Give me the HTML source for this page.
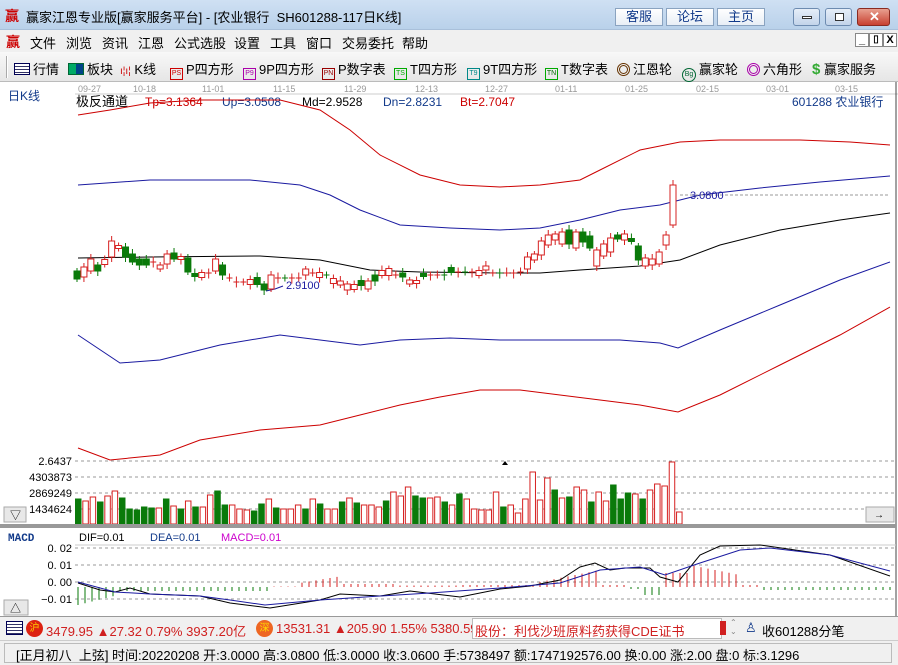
<!DOCTYPE html>
<html><head><meta charset="utf-8"><style>
*{margin:0;padding:0;box-sizing:border-box}
body{width:898px;height:665px;overflow:hidden;background:#fff;font-family:"Liberation Sans","Noto Sans CJK SC",sans-serif;font-size:12px;position:relative}
.abs{position:absolute;white-space:nowrap}
#title{left:0;top:0;width:898px;height:30px;background:linear-gradient(#cfe0f3,#b9d1ea);border-bottom:1px solid #a9c0da}
#menu{left:0;top:30px;width:898px;height:22px;background:#f0f0f0}
#tool{left:0;top:52px;width:898px;height:30px;background:linear-gradient(#f8f8f8,#e6e6e6);border-bottom:1px solid #bbb}
.tb{position:absolute;top:8px;height:18px;background:linear-gradient(#fff,#e8eef6);border:1px solid #8aa3c0;color:#123a8a;font-size:13px;text-align:center;line-height:16px}
.wb{position:absolute;top:8px;height:18px;border:1px solid #6d8bb0;border-radius:3px;background:linear-gradient(#e6eef8,#c3d4ea)}
.mi{position:absolute;top:3px;font-size:13px;color:#000}
.ti{position:absolute;top:7px;font-size:13px;color:#000}
.ic{display:inline-block;width:13px;height:12px;font-size:7px;line-height:10px;text-align:center;border:1px solid;vertical-align:-1px;margin-right:3px}
</style></head><body>
<div id="title" class="abs">
<span class="abs" style="left:5px;top:6px;color:#c00;font-size:14px;font-weight:bold">赢</span>
<span class="abs" style="left:26px;top:7px;font-size:13px">赢家江恩专业版[赢家服务平台] - [农业银行&nbsp; SH601288-117日K线]</span>
<div class="tb" style="left:615px;width:48px">客服</div>
<div class="tb" style="left:666px;width:48px">论坛</div>
<div class="tb" style="left:717px;width:48px">主页</div>
<div class="wb" style="left:793px;width:27px"><div style="position:absolute;left:8px;top:7px;width:10px;height:3px;border:1px solid #333;background:#fff"></div></div>
<div class="wb" style="left:825px;width:27px"><div style="position:absolute;left:9px;top:4px;width:9px;height:8px;border:1px solid #333;background:#fff"></div></div>
<div class="wb" style="left:857px;width:33px;background:linear-gradient(#e8a090,#c84030);border-color:#8a2a20"><span style="position:absolute;left:11px;top:0;color:#fff;font-weight:bold;font-size:13px">✕</span></div>
</div>
<div id="menu" class="abs">
<span class="mi" style="left:6px;color:#c00;font-weight:bold;font-size:14px;top:2px">赢</span>
<span class="mi" style="left:30px">文件</span><span class="mi" style="left:66px">浏览</span><span class="mi" style="left:102px">资讯</span><span class="mi" style="left:138px">江恩</span><span class="mi" style="left:174px">公式选股</span><span class="mi" style="left:234px">设置</span><span class="mi" style="left:270px">工具</span><span class="mi" style="left:306px">窗口</span><span class="mi" style="left:342px">交易委托</span><span class="mi" style="left:402px">帮助</span>
<div class="abs" style="left:855px;top:3px;width:14px;height:14px;border:1px solid #888;background:#fff;font-size:11px;text-align:center;line-height:12px;font-weight:bold">_</div>
<div class="abs" style="left:869px;top:3px;width:14px;height:14px;border:1px solid #888;background:#fff;font-size:10px;text-align:center;line-height:12px;font-weight:bold">▯</div>
<div class="abs" style="left:883px;top:3px;width:14px;height:14px;border:1px solid #888;background:#fff;font-size:11px;text-align:center;line-height:12px;font-weight:bold">X</div>
</div>
<div id="tool" class="abs">
<div class="abs" style="left:6px;top:4px;width:2px;height:22px;border-left:1px solid #aaa;border-right:1px solid #fff"></div>
<span class="ti" style="left:14px"><span class="ic" style="border-color:#005;background:repeating-linear-gradient(#fff 0 2px,#336 2px 3px);width:16px"></span>行情</span>
<span class="ti" style="left:68px"><span class="ic" style="border-color:#063;background:linear-gradient(90deg,#0a6 50%,#048 50%);width:16px"></span>板块</span>
<span class="ti" style="left:120px"><span style="color:#c00;font-size:10px">ı¦ı¦</span> K线</span>
<span class="ti" style="left:170px"><span class="ic" style="border-color:#c00;color:#c00">PS</span>P四方形</span>
<span class="ti" style="left:243px"><span class="ic" style="border-color:#a0a;color:#a0a">P9</span>9P四方形</span>
<span class="ti" style="left:322px"><span class="ic" style="border-color:#900;color:#900">PN</span>P数字表</span>
<span class="ti" style="left:394px"><span class="ic" style="border-color:#0a0;color:#0a0">TS</span>T四方形</span>
<span class="ti" style="left:467px"><span class="ic" style="border-color:#088;color:#088">T9</span>9T四方形</span>
<span class="ti" style="left:545px"><span class="ic" style="border-color:#0a0;color:#060">TN</span>T数字表</span>
<span class="ti" style="left:617px"><span style="display:inline-block;width:13px;height:13px;border-radius:50%;border:3px double #630;vertical-align:-2px;margin-right:3px"></span>江恩轮</span>
<span class="ti" style="left:682px"><span style="display:inline-block;width:14px;height:14px;border-radius:50%;border:1px solid #063;font-size:7px;line-height:12px;text-align:center;vertical-align:-2px;margin-right:3px;color:#063">Bg</span>赢家轮</span>
<span class="ti" style="left:747px"><span style="display:inline-block;width:13px;height:13px;border-radius:50%;border:3px double #a0a;vertical-align:-2px;margin-right:3px"></span>六角形</span>
<span class="ti" style="left:812px"><span style="color:#3a3;font-weight:bold;font-size:15px">$</span> 赢家服务</span>
</div>

<svg class="abs" style="left:0;top:82px" width="898" height="534" viewBox="0 82 898 534" id="ch" font-family="Liberation Sans, Noto Sans CJK SC, sans-serif">
<g font-size="9" fill="#999">
<text x="78" y="92">09-27</text><text x="133" y="92">10-18</text><text x="202" y="92">11-01</text><text x="273" y="92">11-15</text><text x="344" y="92">11-29</text><text x="415" y="92">12-13</text><text x="485" y="92">12-27</text><text x="555" y="92">01-11</text><text x="625" y="92">01-25</text><text x="696" y="92">02-15</text><text x="766" y="92">03-01</text><text x="835" y="92">03-15</text>
</g>
<line x1="75" y1="94" x2="898" y2="94" stroke="#ccc"/>
<text x="8" y="100" font-size="12" fill="#123a8a">日K线</text>
<text x="76" y="106" font-size="13" fill="#000">极反通道</text>
<text x="145" y="106" font-size="12" fill="#c00">Tp=3.1364</text>
<text x="222" y="106" font-size="12" fill="#123a8a">Up=3.0508</text>
<text x="302" y="106" font-size="12" fill="#000">Md=2.9528</text>
<text x="383" y="106" font-size="12" fill="#123a8a">Dn=2.8231</text>
<text x="460" y="106" font-size="12" fill="#c00">Bt=2.7047</text>
<text x="792" y="106" font-size="12" fill="#123a8a">601288 农业银行</text>
<line x1="896" y1="82" x2="896" y2="616" stroke="#444"/>
<g fill="none" stroke-width="1">
<polyline stroke="#c00" points="78,115 110,110 150,103 200,100 280,100 320,110 350,130 380,155 420,175 460,185 500,187 540,185 580,180 600,170 640,150 680,142 720,140 800,140 850,142 890,145"/>
<polyline stroke="#1a1aa0" points="78,185 150,180 250,180 300,185 330,195 360,210 400,225 450,228 500,230 540,228 580,220 620,210 660,205 700,195 760,188 820,182 890,176"/>
<polyline stroke="#000" points="78,258 150,257 260,256 320,260 370,270 420,272 500,273 540,273 580,270 640,266 680,260 720,245 780,230 840,220 890,213"/>
<polyline stroke="#1a1aa0" points="78,335 120,363 160,360 220,345 280,335 320,340 360,345 400,340 450,338 500,340 560,340 620,340 660,343 678,348 720,330 780,305 840,280 890,262"/>
<polyline stroke="#c00" points="78,448 110,460 160,455 200,440 260,430 320,425 360,415 400,405 440,397 480,390 520,390 560,395 600,400 640,405 678,412 720,395 780,365 840,335 890,307"/>
</g>
<line x1="680" y1="195" x2="890" y2="195" stroke="#999" stroke-dasharray="3,2"/>
<text x="690" y="199" font-size="11" fill="#1a1aa0">3.0800</text>
<polyline points="266,291 275,289 283,286" fill="none" stroke="#1a1aa0"/>
<text x="286" y="289" font-size="11" fill="#1a1aa0">2.9100</text>
<g id="cd"></g>
<g stroke="#999" stroke-dasharray="3,3">
<line x1="75" y1="461" x2="896" y2="461"/><line x1="75" y1="477" x2="896" y2="477"/><line x1="75" y1="493" x2="896" y2="493"/><line x1="75" y1="509" x2="896" y2="509"/>
</g>
<g font-size="11" fill="#000" text-anchor="end">
<text x="72" y="465">2.6437</text><text x="72" y="481">4303873</text><text x="72" y="497">2869249</text><text x="72" y="513">1434624</text>
</g>
<path d="M502,465 L505,461 L508,465Z" fill="#000"/>
<g id="vol"></g>
<rect x="0" y="524" width="896" height="4" fill="#999"/>
<rect x="4" y="507" width="22" height="15" fill="#e8e8e8" stroke="#aaa"/><text x="10" y="519" font-size="11">▽</text>
<rect x="866" y="507" width="28" height="15" fill="#e8e8e8" stroke="#aaa"/><text x="874" y="518" font-size="10">→</text>
<text x="8" y="541" font-size="11" fill="#123a8a" font-family="Liberation Mono, monospace" font-weight="bold">MACD</text>
<text x="79" y="541" font-size="11" fill="#000">DIF=0.01</text>
<text x="150" y="541" font-size="11" fill="#123a8a">DEA=0.01</text>
<text x="221" y="541" font-size="11" fill="#c0c">MACD=0.01</text>
<g stroke="#999" stroke-dasharray="3,3">
<line x1="75" y1="545" x2="896" y2="545" stroke-dasharray="none" stroke="#ccc"/>
<line x1="75" y1="548" x2="896" y2="548"/><line x1="75" y1="565" x2="896" y2="565"/><line x1="75" y1="582" x2="896" y2="582"/><line x1="75" y1="599" x2="896" y2="599"/>
</g>
<g font-size="11" fill="#000" text-anchor="end">
<text x="72" y="552">0. 02</text><text x="72" y="569">0. 01</text><text x="72" y="586">0. 00</text><text x="72" y="603">−0. 01</text>
</g>
<g id="mh"></g>
<polyline fill="none" stroke="#000" points="78,583 100,590 115,592 130,588 150,594 200,596 230,603 270,608 320,600 340,594 380,596 410,591 460,597 500,589 530,586 560,580 580,567 595,563 610,570 625,568 650,568 660,577 678,582 700,555 720,546 760,545 830,555 890,576"/>
<polyline fill="none" stroke="#1a1aa0" points="78,582 115,592 150,594 200,596 230,600 265,605 320,600 380,596 430,593 500,588 560,583 600,570 640,567 665,575 700,563 740,550 770,548 830,555 890,571"/>
<rect x="4" y="600" width="24" height="15" fill="#e8e8e8" stroke="#aaa"/><text x="10" y="612" font-size="11">△</text>
</svg>

<div class="abs" style="left:0;top:616px;width:898px;height:24px;background:#f0f0f0;border-top:1px solid #999">
<span class="abs" style="left:6px;top:4px;width:17px;height:14px;border:1px solid #005;background:repeating-linear-gradient(#fff 0 2px,#336 2px 3px)"></span>
<span class="abs" style="left:26px;top:3px;width:17px;height:17px;border-radius:50%;background:#d21;color:#fc0;font-size:10px;text-align:center;line-height:17px">沪</span>
<span class="abs" style="left:46px;top:4px;color:#d02020;font-size:13px">3479.95 ▲27.32 0.79% 3937.20亿</span>
<span class="abs" style="left:256px;top:3px;width:17px;height:17px;border-radius:50%;background:#e62;color:#fd0;font-size:10px;text-align:center;line-height:17px">深</span>
<span class="abs" style="left:276px;top:4px;color:#d02020;font-size:13px">13531.31 ▲205.90 1.55% 5380.59</span>
<span class="abs" style="left:472px;top:1px;width:250px;height:21px;background:#fff;border:1px solid #bbb;color:#d02020;font-size:13px;padding:2px 0 0 2px;overflow:hidden">股份：利伐沙班原料药获得CDE证书</span>
<span class="abs" style="left:720px;top:4px;width:6px;height:14px;background:#d02020"></span>
<span class="abs" style="left:730px;top:1px;color:#888;font-size:8px;line-height:9px">⌃<br>⌄</span>
<span class="abs" style="left:745px;top:3px;color:#123a8a;font-size:13px">♙</span>
<span class="abs" style="left:762px;top:4px;color:#000;font-size:13px">收601288分笔</span>
</div>
<div class="abs" style="left:0;top:640px;width:898px;height:25px;background:#f0f0f0;border-top:1px solid #ccc">
<span class="abs" style="left:4px;top:2px;width:888px;height:20px;border:1px solid #bbb"></span>
<span class="abs" style="left:16px;top:4px;font-size:13px;color:#000">[正月初八&nbsp; 上弦] 时间:20220208 开:3.0000 高:3.0800 低:3.0000 收:3.0600 手:5738497 额:1747192576.00 换:0.00 涨:2.00 盘:0 标:3.1296</span>
</div>
<script>
var NS="http://www.w3.org/2000/svg";
function el(p,t,a){var e=document.createElementNS(NS,t);for(var k in a)e.setAttribute(k,a[k]);p.appendChild(e);return e;}
var ys=[275,272,265,268,262,249,247,252,258,262,262,262,267,259,256,258,265,275,275,273,265,270,278,282,282,282,281,287,282,278,278,278,278,272,273,275,275,281,283,287,287,283,285,278,273,272,275,275,282,282,275,275,275,275,270,272,272,272,273,268,273,273,273,273,272,263,257,248,240,237,238,237,240,237,242,258,250,245,237,237,240,253,262,262,258,240,205];
var bh=[8,10,12,6,5,16,3,10,8,6,6,1,4,10,6,3,14,3,5,1,12,10,1,1,1,5,7,6,14,1,1,1,1,6,1,5,1,5,4,6,5,5,8,6,5,7,1,4,4,3,3,1,1,1,5,1,1,1,5,4,1,1,1,1,1,12,6,14,10,6,12,14,16,10,12,16,12,14,4,6,3,14,8,6,12,10,40];
var up="GRRGRRRGGGGRRRGRGGRRRGRRRRGGRRGRRRRRGRRRRGRGRRRGRRGRRGGRGRRRRGRRRRRRRRRGRGGRRRGRGGRRRRRR";
var cd=document.getElementById("cd"),n=ys.length;
for(var i=0;i<n;i++){var x=77+i*(596/(n-1));var c=up[i]=="G"?"#0a7a0a":"#d62020";var h=bh[i];var t=ys[i]-h/2;
el(cd,"line",{x1:x,y1:t-3-(i%3),x2:x,y2:t+h+3+(i%2)*2,stroke:c});
if(h<2)el(cd,"line",{x1:x-3,y1:ys[i],x2:x+3,y2:ys[i],stroke:c});
else el(cd,"rect",{x:x-3,y:t,width:6,height:h,fill:up[i]=="G"?c:"#fff",stroke:c});}
var vt=[499,501,497,502,496,491,498,509,510,507,508,508,499,506,509,501,507,507,495,491,505,505,509,510,511,504,499,508,509,509,505,509,499,504,509,509,502,498,503,505,505,507,501,492,496,487,496,498,498,497,502,505,494,499,509,510,510,492,507,505,513,499,472,500,478,490,498,497,487,490,502,492,501,485,499,493,494,499,490,484,486,462,512];
var vc="GRRGRRGGGGGRGRGRGRRGGRRRGGRGRRRGRGRRGRGRRRGRRRGGRRGRGRRRRRGRRRRRRGRGRRGRRGGGRGRRRRR";
var vg=document.getElementById("vol");
for(var i=0;i<vt.length;i++){var x=75+i*7.33;var g=vc[i]=="G";el(vg,"rect",{x:x+0.5,y:vt[i],width:5.5,height:524-vt[i],fill:g?"#0a7a0a":"#fff",stroke:g?"#0a7a0a":"#d62020"});}
var mh=document.getElementById("mh");
for(var x=78;x<=890;x+=7){var v;
if(x<120)v=-(18-(x-78)/4);else if(x<270)v=-4;else if(x<300)v=0.5;else if(x<340)v=4+(x-300)/6;else if(x<400)v=3;else if(x<460)v=1.5;else if(x<540)v=2;else if(x<600)v=5+(x-540)/5;else if(x<630)v=2;else if(x<640)v=-2;else if(x<665)v=-8;else if(x<740)v=22-(x-690)/5;else if(x<760)v=2;else v=-3;
if(x>=665&&x<690)v=14;
var base=587;el(mh,"line",{x1:x,y1:base,x2:x,y2:base-v,stroke:v>0?"#d62020":"#0a7a0a"});}
</script>
</body></html>
